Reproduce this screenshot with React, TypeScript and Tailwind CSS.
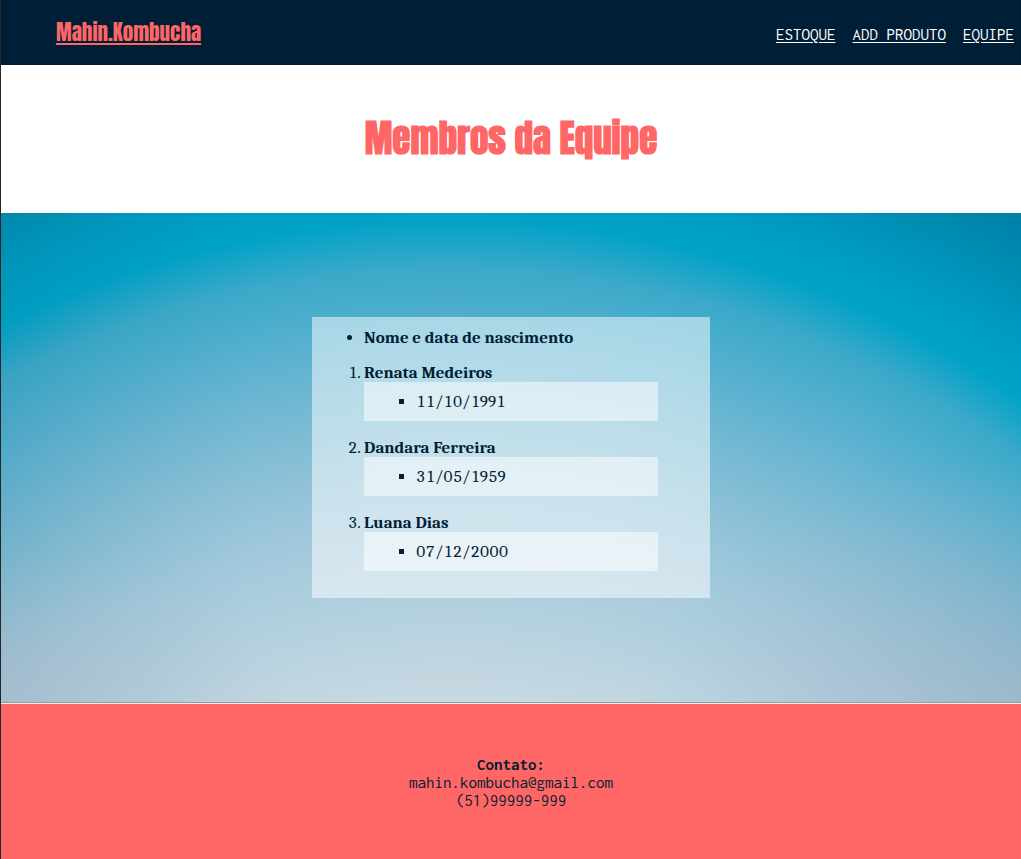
const members = [
  { name: "Renata Medeiros", birth: "11/10/1991" },
  { name: "Dandara Ferreira", birth: "31/05/1959" },
  { name: "Luana Dias", birth: "07/12/2000" },
];

const links = ["ESTOQUE", "ADD PRODUTO", "EQUIPE"];

function Header() {
  return (
    <header className="flex h-[65px] items-center justify-between bg-[#001e35] pr-[7px] pb-[2px] pl-[55px]">
      <a
        href="#inicio"
        className="font-[Impact,Anton,'Roboto_Condensed',Roboto,sans-serif] text-[21px] leading-7 text-[#ff6666] underline decoration-2 underline-offset-2"
      >
        Mahin.Kombucha
      </a>
      <nav className="flex gap-[17px] pt-[6px] font-[Consolas,Inconsolata,'DejaVu_Sans_Mono',monospace] text-[17px] text-white">
        {links.map((label) => (
          <a key={label} href="#" className="underline underline-offset-2">
            {label}
          </a>
        ))}
      </nav>
    </header>
  );
}

function MemberCard() {
  return (
    <section className="w-[39%] min-w-[340px] bg-white/50 px-[52px] pt-3 pb-[27px] font-[Cambria,Caladea,'DejaVu_Serif',serif] text-[17px] leading-[18px] text-[#001e35] tabular-nums">
      <ul className="mb-[17px] list-disc font-bold">
        <li>Nome e data de nascimento</li>
      </ul>
      <ol className="flex list-decimal flex-col gap-[18px]">
        {members.map((member) => (
          <li key={member.name}>
            <span className="block font-bold">{member.name}</span>
            <ul className="list-[square] bg-white/50 py-[10px] pl-[52px] leading-[19px]">
              <li>{member.birth}</li>
            </ul>
          </li>
        ))}
      </ol>
    </section>
  );
}

export default function App() {
  return (
    <div className="flex min-h-screen flex-col border-l border-[#262626] bg-white">
      <Header />
      <h1 className="flex h-[148px] items-center justify-center font-[Impact,Anton,'Roboto_Condensed',Roboto,sans-serif] text-[37px] font-bold text-[#ff6666]">
        Membros da Equipe
      </h1>
      <main className="flex justify-center bg-[linear-gradient(to_right,rgba(20,60,80,0.06),rgba(20,60,80,0)_25%),radial-gradient(ellipse_30%_30%_at_0%_100%,rgba(186,194,208,0.5),rgba(186,194,208,0)),radial-gradient(ellipse_35%_50%_at_100%_100%,rgba(178,178,194,0.5),rgba(178,178,194,0)),radial-gradient(circle_at_44%_1010px,#c8d9e2_523px,#b0cfde_628px,#a2c8dc_695px,#8cc1d6_760px,#73b8d3_828px,#55b0cf_895px,#3ba9c9_955px,#00a2c8_1004px,#009bc1_1050px,#008bb2_1110px,#007fa8_1160px)] py-[104px]">
        <MemberCard />
      </main>
      <hr className="h-[2px] border-t border-b border-t-[#9a9a9a] border-b-[#eeeeee]" />
      <footer className="flex-1 bg-[#ff6666] pt-[51px] pb-[50px] text-center font-[Consolas,Inconsolata,'DejaVu_Sans_Mono',monospace] text-[17px] leading-[18px] text-[#001e35]">
        <p className="font-bold">Contato:</p>
        <p>mahin.kombucha@gmail.com</p>
        <p>(51)99999-999</p>
      </footer>
    </div>
  );
}
